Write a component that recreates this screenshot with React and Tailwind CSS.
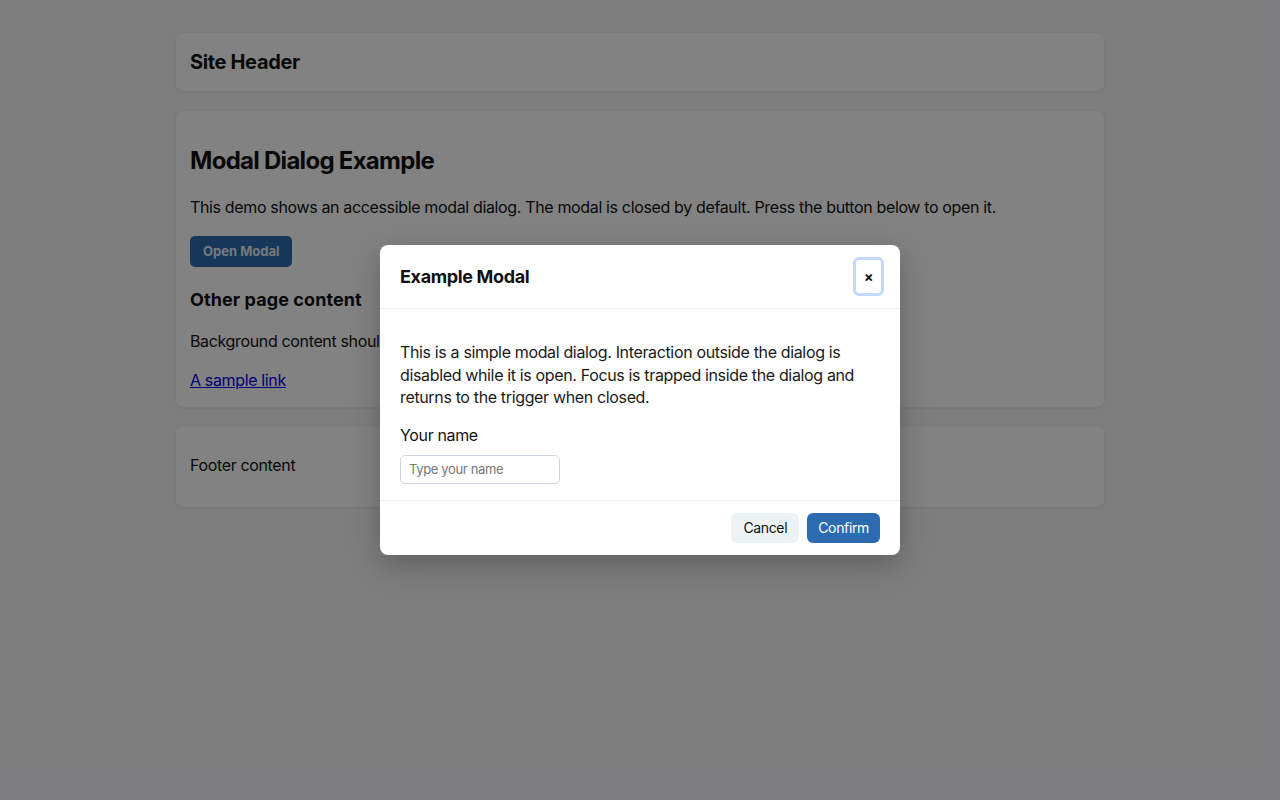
import React from "react";

const font = { fontFamily: "Inter, 'Noto Sans', sans-serif" };

const Card = ({ className = "", children }) => (
  <div
    className={`bg-white rounded-lg border border-[#f0f0f0] shadow-[0_1px_2px_rgba(0,0,0,0.06)] px-[14px] ${className}`}
  >
    {children}
  </div>
);

const ExampleModal = () => (
  <div
    role="dialog"
    aria-modal="true"
    aria-labelledby="modal-title"
    className="w-[520px] bg-white rounded-lg shadow-[0_10px_30px_rgba(0,0,0,0.25)] text-[#111]"
  >
    <div className="flex items-center justify-between px-5 py-3 border-b border-[#eceef1]">
      <h2 id="modal-title" className="text-[18px] font-bold leading-6">
        Example Modal
      </h2>
      <button
        aria-label="Close"
        className="shrink-0 -mr-1 w-[31px] h-[39px] flex items-center justify-center rounded-md border-[3px] border-[#c3d9fb] bg-white text-[14px] font-bold leading-none"
      >
        ×
      </button>
    </div>

    <div className="px-5 pt-8 pb-4 border-b border-[#eceef1]">
      <p className="text-[16px] leading-[22.5px] text-[#1a1a1a]">
        This is a simple modal dialog. Interaction outside the dialog is
        disabled while it is open. Focus is trapped inside the dialog and
        returns to the trigger when closed.
      </p>
      <label htmlFor="name" className="block mt-[15px] text-[16px] leading-[22px]">
        Your name
      </label>
      <input
        id="name"
        type="text"
        placeholder="Type your name"
        className="block mt-[9px] w-[160px] h-[29px] px-2 rounded-[5px] border border-[#cbd5e1] text-[13px] placeholder:text-[#777] outline-none"
      />
    </div>

    <div className="flex justify-end gap-2 px-5 py-3">
      <button className="h-[30px] px-3 rounded-md bg-[#edf2f7] text-[14px] text-[#111]">
        Cancel
      </button>
      <button className="h-[30px] px-[11px] rounded-md bg-[#2b6cb0] text-[14px] text-white">
        Confirm
      </button>
    </div>
  </div>
);

export default function App() {
  return (
    <div
      className="relative min-h-[800px] bg-[#f7f8fa] text-[#111] tracking-[-0.022em]"
      style={font}
    >
      <div className="w-[930px] mx-auto pt-8 flex flex-col gap-[18px]">
        <Card className="h-[60px] flex items-center">
          <h1 className="text-[20px] font-bold">Site Header</h1>
        </Card>

        <Card className="pt-[35px] pb-[15px]">
          <h2 className="text-[24px] font-bold leading-[29px] tracking-[-0.03em]">
            Modal Dialog Example
          </h2>
          <p className="mt-5 text-[16px] leading-6">
            This demo shows an accessible modal dialog. The modal is closed by
            default. Press the button below to open it.
          </p>
          <button className="mt-[17px] h-[31px] px-[13px] rounded-[5px] bg-[#2b6cb0] text-[#e9eef5] text-[13px] font-bold tracking-normal">
            Open Modal
          </button>
          <h3 className="mt-[22px] text-[18px] font-bold leading-[22px] tracking-[0.005em]">
            Other page content
          </h3>
          <p className="mt-[18px] text-[16px] leading-6">
            Background content should not be reachable while the modal is open.
          </p>
          <p className="mt-[15px] text-[16px] leading-6">
            <a href="#" className="text-[#0000ee] underline">
              A sample link
            </a>
          </p>
        </Card>

        <Card className="-mt-px pt-[27px] pb-[30px]">
          <p className="text-[16px] leading-6">Footer content</p>
        </Card>
      </div>

      <div className="absolute inset-0 bg-black/[0.49] flex justify-center items-start pt-[245px]">
        <ExampleModal />
      </div>
    </div>
  );
}
